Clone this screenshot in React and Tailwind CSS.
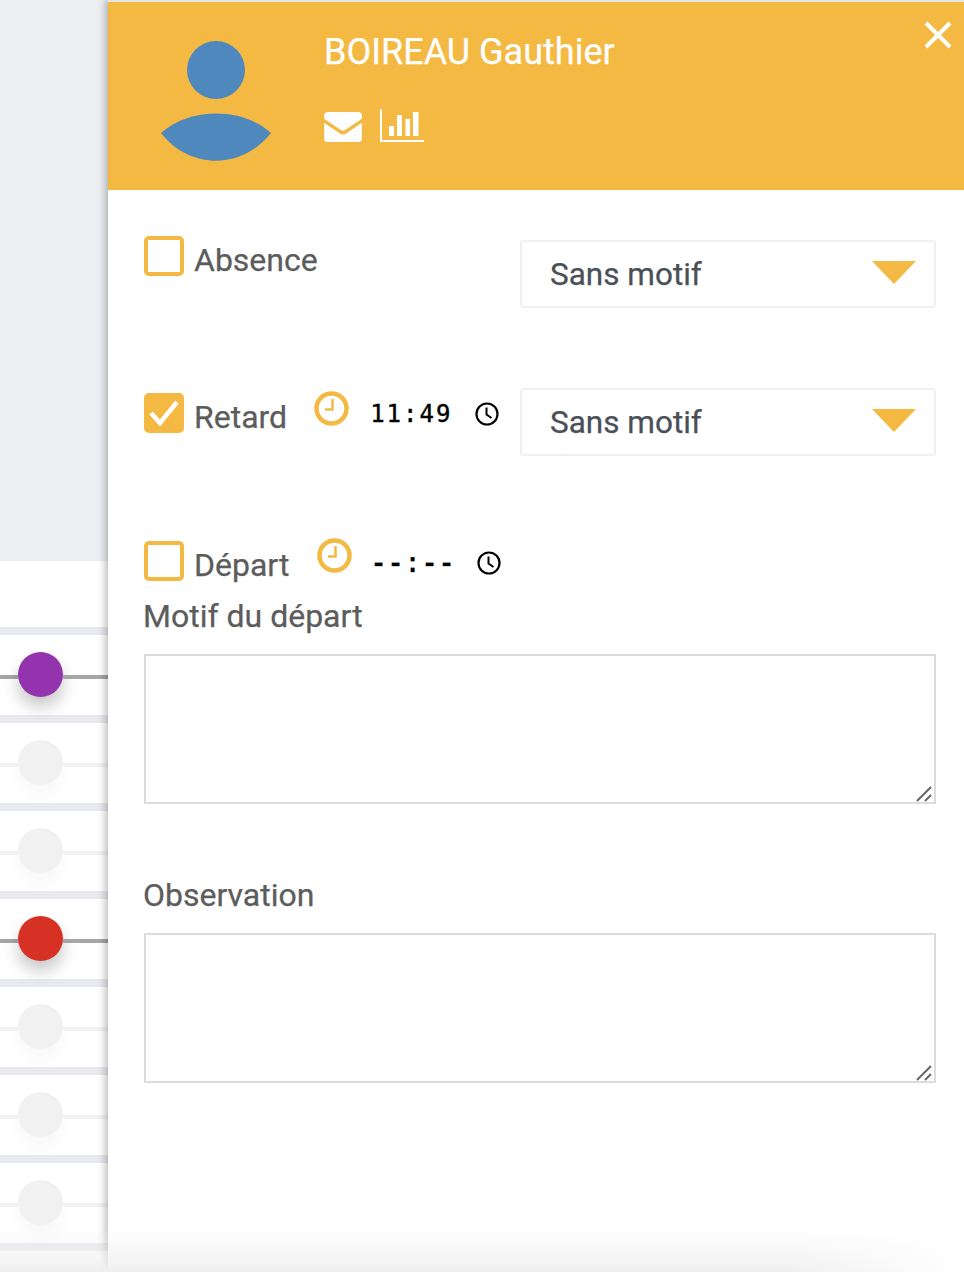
import React from "react";

const Y = "#f4b942";

function Row({ on, color }) {
  return (
    <div>
      <div className="h-2 bg-[#e9eaef]" />
      <div className="h-20 flex items-center">
        <div className={`h-1 w-[18px] mt-1 ${on ? "bg-[#a6a6a6]" : "bg-[#f3f3f3]"}`} />
        <div
          className="w-[45px] h-[45px] rounded-full shrink-0 -mt-px"
          style={{ background: color || "#f1f1f1", boxShadow: on ? "0 10px 16px rgba(0,0,0,0.22)" : "0 10px 16px rgba(0,0,0,0.03)" }}
        />
        <div className={`h-1 flex-1 mt-1 ${on ? "bg-[#a6a6a6]" : "bg-[#f3f3f3]"}`} />
      </div>
    </div>
  );
}

function Check({ checked }) {
  return (
    <div className={`w-10 h-10 rounded-[5px] border-4 border-[#f4b942] shrink-0 flex items-center justify-center ${checked ? "bg-[#f4b942]" : "bg-white"}`}>
      {checked && (
        <svg width="30" height="26" viewBox="0 0 30 26" fill="none" className="shrink-0">
          <path d="M2 13 L11 23 L28 2" stroke="#fff" strokeWidth="4.5" />
        </svg>
      )}
    </div>
  );
}

function YClock() {
  return (
    <svg width="35" height="35" viewBox="0 0 35 35" fill="none" className="block">
      <circle cx="17.5" cy="17.5" r="15" stroke={Y} strokeWidth="4.5" />
      <path d="M18.5 8 V18.5 H11" stroke={Y} strokeWidth="2.5" />
    </svg>
  );
}

function BClock() {
  return (
    <svg width="24" height="24" viewBox="0 0 24 24" fill="none" className="block">
      <circle cx="12" cy="12" r="10.5" stroke="#000" strokeWidth="2.2" />
      <path d="M11.5 5.5 V12.5 L16.5 16" stroke="#000" strokeWidth="2" />
    </svg>
  );
}

function Select({ className }) {
  return (
    <div className={`w-[416px] h-[68px] border-2 border-[#f0f0f0] rounded-[4px] flex items-center justify-between pl-[28px] pr-[18px] text-[31.5px] text-[#495057] [-webkit-text-stroke:0.25px_#495057] ${className || ""}`}>
      <span className="translate-y-px">Sans motif</span>
      <svg width="44" height="23" viewBox="0 0 44 23" className="mt-[-4px]">
        <path d="M0 0 H44 L22 23 Z" fill={Y} />
      </svg>
    </div>
  );
}

function Area() {
  return (
    <div className="relative w-[792px] h-[150px] border-2 border-[#dcdcdc]">
      <textarea className="w-full h-full resize-none outline-none block" />
      <svg width="18" height="16" viewBox="0 0 18 16" className="absolute right-0 bottom-0" fill="none">
        <path d="M1 15 L15 1 M9 15 L15 9" stroke="#666" strokeWidth="2" />
      </svg>
    </div>
  );
}

export default function App() {
  return (
    <div className="relative w-[964px] h-[1272px] overflow-hidden flex bg-white font-['Roboto',sans-serif]">
      <div className="w-[108px] shrink-0">
        <div className="h-[561px] bg-[#eceef1]" />
        <div className="h-[66px] bg-white" />
        <div className="h-2 bg-[#dcdde1] -mb-2" />
        <Row on color="#9333ad" />
        <Row />
        <Row />
        <Row on color="#d63124" />
        <Row />
        <Row />
        <Row />
        <Row />
      </div>

      <div className="flex-1 bg-white border-t-2 border-[#e6e6e6] shadow-[-3px_0_7px_rgba(0,0,0,0.25)] z-10">
        <header className="relative h-[188px] bg-[#f4b942] flex">
          <div className="w-[216px] shrink-0 flex flex-col items-center pt-[39px]">
            <div className="w-[58px] h-[58px] rounded-full bg-[#4f88bd]" />
            <svg width="112" height="48" viewBox="0 0 112 48" className="mt-[14px]">
              <path d="M1 20 C30 -6 82 -6 111 20 C82 57 30 57 1 20 Z" fill="#4f88bd" />
            </svg>
          </div>
          <div className="pt-[28px] text-white">
            <h1 className="text-[36px] leading-[44px] font-normal [-webkit-text-stroke:0.25px_#fff]">BOIREAU Gauthier</h1>
            <div className="flex items-start gap-[18px] mt-[38px]">
              <svg width="38" height="30" viewBox="0 0 39 31">
                <path d="M4 0 H35 A4 4 0 0 1 39 4 V7 L21 19 Q19.500 20 18 19 L0 7 V4 A4 4 0 0 1 4 0 Z M0 11 L16 22 Q19.500 24.500 23 22 L39 11 V27 A4 4 0 0 1 35 31 H4 A4 4 0 0 1 0 27 Z" fill="#fff" />
              </svg>
              <svg width="44" height="33" viewBox="0 0 44 33" fill="none" className="mt-[-3px]">
                <path d="M1 0 V32 H44" stroke="#fff" strokeWidth="2" />
                <path d="M9 17 H14 V27 H9 Z M17 6 H22 V27 H17 Z M25.500 10 H30 V27 H25.500 Z M33 3 H38.500 V27 H33 Z" fill="#fff" />
              </svg>
            </div>
          </div>
          <svg width="28" height="28" viewBox="0 0 28 28" className="absolute right-[12px] top-[19px]" fill="none">
            <path d="M2 2 L26 26 M26 2 L2 26" stroke="#fff" strokeWidth="4" />
          </svg>
        </header>

        <div className="pl-9 text-[32px] text-[#5c5c5c] [-webkit-text-stroke:0.25px_#5c5c5c]">
          <div className="flex items-start h-[198px] pt-[46px]">
            <div className="flex items-start gap-[10px] w-[376px]">
              <Check />
              <span className="leading-10 mt-[4px]">Absence</span>
            </div>
            <Select className="mt-[4px]" />
          </div>

          <div className="flex items-start h-[153px] pt-[5px]">
            <div className="flex items-center w-[376px] h-10">
              <Check checked />
              <span className="leading-10 ml-[10px] mt-[8px]">Retard</span>
              <span className="ml-[27px] mt-[-10px]"><YClock /></span>
              <span className="ml-[21px] font-['DejaVu_Sans_Mono',monospace] text-[24px] tracking-[2px] text-black [-webkit-text-stroke:0.4px_#000] mt-[2px]">11:49</span>
              <span className="ml-[23px] mt-[2px]"><BClock /></span>
            </div>
            <Select className="mt-[-5px]" />
          </div>

          <div className="flex items-center h-10">
            <Check />
            <span className="leading-10 ml-[10px] mt-[8px]">Départ</span>
            <span className="ml-[28px] mt-[-11px]"><YClock /></span>
            <span className="ml-[18px] font-['Liberation_Mono',monospace] font-bold text-[27px] tracking-[0.8px] text-black mt-[8px]">--:--</span>
            <span className="ml-[22px] mt-[3px]"><BClock /></span>
          </div>

          <div className="mt-[15px] leading-10 -ml-px">Motif du départ</div>
          <div className="mt-[18px]"><Area /></div>
          <div className="mt-[71px] leading-10 -ml-px">Observation</div>
          <div className="mt-[18px]"><Area /></div>
        </div>
      </div>

      <div className="absolute left-0 right-0 bottom-0 h-[44px] z-20 bg-gradient-to-t from-[#f0f0f0] to-transparent [mask-image:linear-gradient(to_right,black_82%,transparent)] pointer-events-none" />
    </div>
  );
}
